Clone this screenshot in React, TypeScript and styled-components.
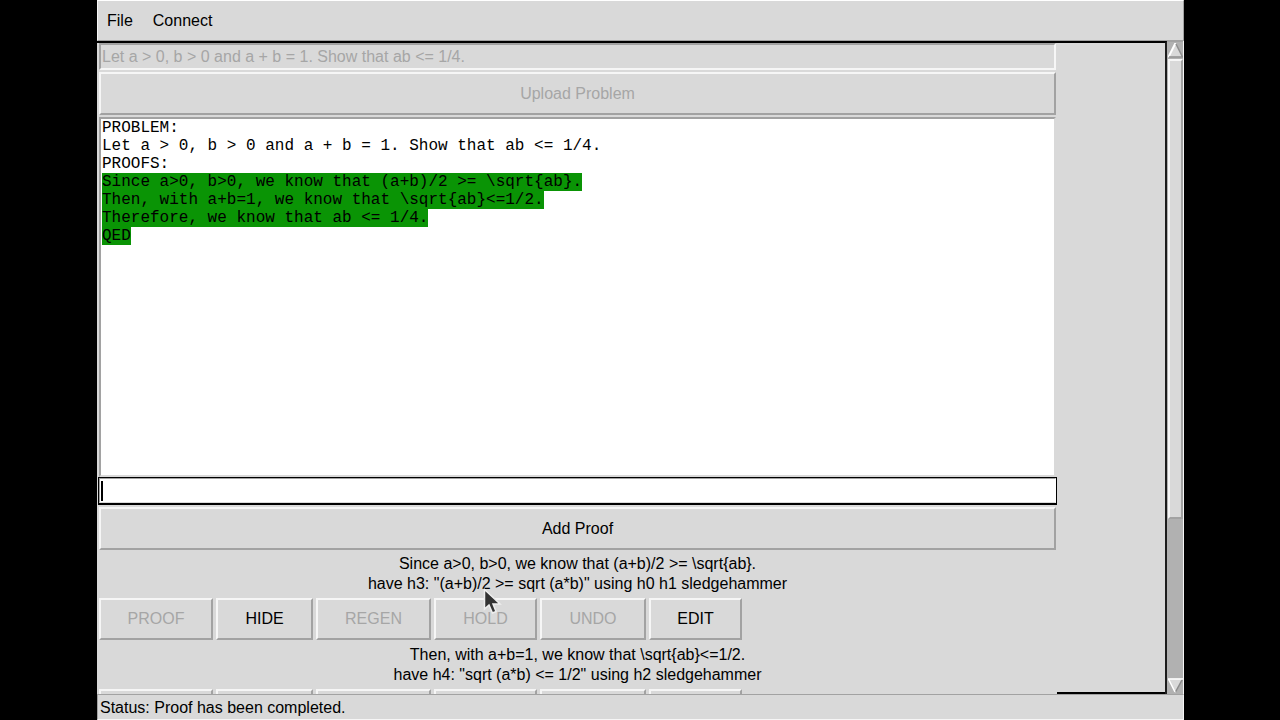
import React from "react";
import styled, { createGlobalStyle, css } from "styled-components";

const face = "#d9d9d9";
const light = "#f6f6f6";
const shade = "#a2a2a2";
const muted = "#a6a6a6";
const sans = '"Liberation Sans", Arial, sans-serif';
const mono = '"Liberation Mono", "Courier New", monospace';

const GlobalStyle = createGlobalStyle`
  * { box-sizing: border-box; }
  body { margin: 0; background: #000; overflow: hidden; }
  button, input { font: inherit; border-radius: 0; margin: 0; }
`;

const raised = css`
  border: 2px solid;
  border-color: ${light} ${shade} ${shade} ${light};
`;

const sunken = css`
  border: 2px solid;
  border-color: ${shade} ${light} ${light} ${shade};
`;

const Window = styled.div`
  display: flex;
  flex-direction: column;
  height: 100vh;
  margin: 0 96px 0 97px;
  background: ${face};
  color: #000;
  font: 16px/20px ${sans};
`;

const MenuBar = styled.nav`
  display: flex;
  flex: none;
  gap: 20px;
  padding: 10px 9px 9px;
  border: 1px solid;
  border-color: #fff ${shade} ${shade} ${light};
`;

const MenuButton = styled.button`
  padding: 0;
  border: 0;
  background: none;
  color: inherit;
`;

const Body = styled.div`
  display: flex;
  flex: 1;
  min-height: 0;
  border-right: 1px solid ${light};
`;

const Viewport = styled.main`
  display: flex;
  flex: 1;
  min-width: 0;
  overflow: hidden;
  padding-left: 1px;
  border-top: 2px solid #000;
  border-right: 2px solid #1c1c1c;
`;

const Frame = styled.div`
  display: flex;
  flex: 1;
  flex-direction: column;
  min-width: 0;
`;

const Blank = styled.div`
  width: 108px;
  border-bottom: 2px solid #000;
`;

const ProblemEntry = styled.input`
  flex: none;
  height: 27px;
  margin: 0 1px;
  padding: 0 1px;
  ${sunken}
  background: ${face};
  color: ${muted};
`;

const WideButton = styled.button`
  flex: none;
  height: 43px;
  margin: 2px 1px;
  padding: 0;
  ${raised}
  background: ${face};
  color: #000;
  &:disabled { color: ${muted}; }
`;

const Document = styled.section`
  flex: none;
  height: 360px;
  margin: 0 1px;
  padding: 0 1px;
  border: 2px solid;
  border-color: ${shade} ${face} ${face} ${shade};
  background: #fff;
  font: 16px/18px ${mono};
  white-space: pre;
`;

const Line = styled.div``;

const Proved = styled.span`
  display: inline-block;
  height: 18px;
  background: #0a9405;
`;

const ProofEntryBox = styled.div`
  position: relative;
  flex: none;
  height: 28px;
  border: 1px solid #000;
  border-bottom-width: 2px;
  background: #fff;
`;

const ProofEntry = styled.input`
  display: block;
  width: 100%;
  height: 100%;
  padding: 0 2px;
  border: 1px solid;
  border-color: ${shade} #fff ${face} ${shade};
  outline: 0;
  background: #fff;
  caret-color: transparent;
`;

const Caret = styled.span`
  position: absolute;
  top: 3px;
  left: 2px;
  width: 2px;
  height: 20px;
  background: #000;
`;

const Step = styled.p`
  flex: none;
  margin: 0;
  padding: 2px 0 4px;
  text-align: center;
  white-space: pre-line;
`;

const Actions = styled.div`
  display: grid;
  flex: none;
  grid-template-columns: 114px 97px 115px 103px 106px 93px;
  gap: 3px;
  margin: 0 1px 3px;
`;

const ActionButton = styled.button`
  height: 42px;
  padding: 0;
  ${raised}
  background: ${face};
  color: #000;
  &:disabled { color: ${muted}; }
`;

const ScrollBar = styled.div`
  display: flex;
  flex: none;
  flex-direction: column;
  width: 16px;
  padding: 1px 0 1px 1px;
  border-top: 1px solid ${shade};
  background: #b1b1b1;
`;

const ArrowButton = styled.button`
  display: block;
  height: 15px;
  padding: 0;
  border: 0;
  background: none;
`;

const Thumb = styled.div`
  flex: 459;
  margin-top: 1px;
  ${raised}
  background: ${face};
`;

const Trough = styled.div`
  flex: 160;
`;

const StatusBar = styled.footer`
  flex: none;
  height: 26px;
  padding: 3px 2px 0;
  border: 1px solid;
  border-color: ${shade} ${light} ${light} ${shade};
`;

const Pointer = styled.svg`
  position: absolute;
  top: 588px;
  left: 483px;
  pointer-events: none;
`;

const actions = [
  { name: "PROOF", enabled: false },
  { name: "HIDE", enabled: true },
  { name: "REGEN", enabled: false },
  { name: "HOLD", enabled: false },
  { name: "UNDO", enabled: false },
  { name: "EDIT", enabled: true },
];

const problem = "Let a > 0, b > 0 and a + b = 1. Show that ab <= 1/4.";

const proofs = [
  "Since a>0, b>0, we know that (a+b)/2 >= \\sqrt{ab}.",
  "Then, with a+b=1, we know that \\sqrt{ab}<=1/2.",
  "Therefore, we know that ab <= 1/4.",
  "QED",
];

const steps = [
  proofs[0] + '\nhave h3: "(a+b)/2 >= sqrt (a*b)" using h0 h1 sledgehammer',
  proofs[1] + '\nhave h4: "sqrt (a*b) <= 1/2" using h2 sledgehammer',
];

export default function App() {
  return (
    <>
      <GlobalStyle />
      <Window>
        <MenuBar>
          <MenuButton>File</MenuButton>
          <MenuButton>Connect</MenuButton>
        </MenuBar>
        <Body>
          <Viewport>
            <Frame>
              <ProblemEntry aria-label="Problem" disabled defaultValue={problem} />
              <WideButton disabled>Upload Problem</WideButton>
              <Document aria-label="Document">
                <Line>PROBLEM:</Line>
                <Line>{problem}</Line>
                <Line>PROOFS:</Line>
                {proofs.map((text) => (
                  <Line key={text}>
                    <Proved>{text}</Proved>
                  </Line>
                ))}
              </Document>
              <ProofEntryBox>
                <ProofEntry aria-label="Proof" />
                <Caret />
              </ProofEntryBox>
              <WideButton>Add Proof</WideButton>
              {steps.map((text) => (
                <React.Fragment key={text}>
                  <Step>{text}</Step>
                  <Actions>
                    {actions.map((a) => (
                      <ActionButton key={a.name} disabled={!a.enabled}>
                        {a.name}
                      </ActionButton>
                    ))}
                  </Actions>
                </React.Fragment>
              ))}
            </Frame>
            <Blank />
          </Viewport>
          <ScrollBar>
            <ArrowButton aria-label="Scroll up">
              <svg width="15" height="15" viewBox="0 0 15 15">
                <path d="M7.5 0 L15 14.5 H0 Z" fill={face} />
                <path d="M7.5 0 L0.5 14" stroke="#fff" strokeWidth="2" />
                <path d="M8 1 L14.5 14 H1" fill="none" stroke="#8f8f8f" strokeWidth="1.5" />
              </svg>
            </ArrowButton>
            <Thumb />
            <Trough />
            <ArrowButton aria-label="Scroll down">
              <svg width="15" height="15" viewBox="0 0 15 15">
                <path d="M7.5 15 L15 0.5 H0 Z" fill={face} />
                <path d="M14.5 1 L7.5 14" stroke="#8a8a8a" strokeWidth="1.5" />
                <path d="M15 1 H0.5 L7 14" fill="none" stroke="#fff" strokeWidth="1.5" />
              </svg>
            </ArrowButton>
          </ScrollBar>
        </Body>
        <StatusBar>Status: Proof has been completed.</StatusBar>
      </Window>
      <Pointer width="20" height="28" viewBox="0 0 20 28">
        <path
          d="M1.5 1.5 V21 L6 17 L9.5 25 L13 23.5 L10 16 H17 Z"
          fill="#333"
          stroke="#eee"
          strokeWidth="1.5"
        />
      </Pointer>
    </>
  );
}
